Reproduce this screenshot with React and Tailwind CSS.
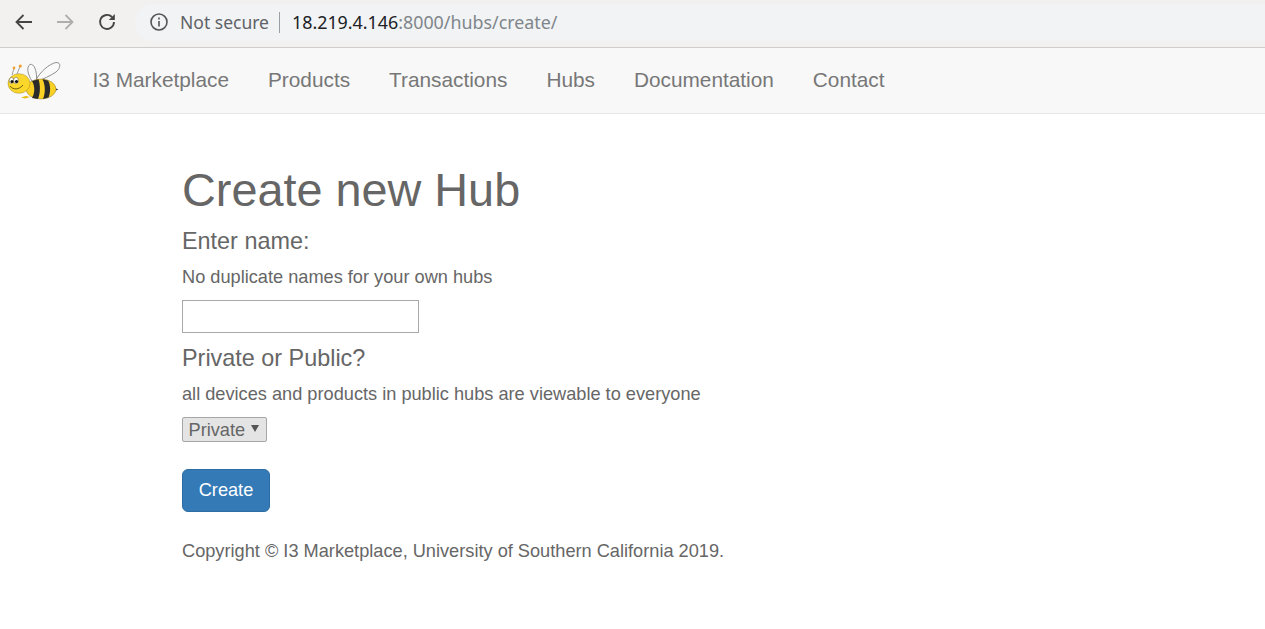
const navLinks = ["I3 Marketplace", "Products", "Transactions", "Hubs", "Documentation", "Contact"];

function Bee() {
  return (
    <svg width="70" height="60" viewBox="0 50 70 60" className="block shrink-0">
      <path d="M32 80 C28 74 26 66 30 63.5 C34 62 37 70 36.5 78" fill="#fafafa" stroke="#8f8f8f" strokeWidth="1" />
      <path d="M36 79 C40 71 49 63 56 61.5 C61 61 61 67 56 71 C50 75 43 78 38 80" fill="#fafafa" stroke="#8f8f8f" strokeWidth="1" />
      <ellipse cx="41" cy="88" rx="15" ry="10" fill="#fbd125" stroke="#6b5a10" strokeWidth="0.4" />
      <path d="M32 80 C35 85 35 92 32 97 L38 98 C40.5 92 40.5 84 38.5 78.2 Z" fill="#2b2b2b" />
      <path d="M42.5 78.2 C45.5 84 45.5 92 43 98 L48.5 96.6 C51 91 50.5 83 48 79.6 Z" fill="#2b2b2b" />
      <path d="M56 87.5 L58.5 88.5 L56 89.5 Z" fill="#444" />
      <path d="M26 95 L21 96.5 L25 97.5 L30 96 Z" fill="#e6b800" />
      <ellipse cx="19" cy="82.5" rx="11" ry="9.8" fill="#fcd72b" stroke="#8a7414" strokeWidth="0.4" />
      <path d="M12 74 L14 67.5 M17 73 L20 65.5" stroke="#8a8a8a" strokeWidth="0.8" fill="none" />
      <circle cx="14" cy="67" r="1.4" fill="#f0a030" />
      <circle cx="20.3" cy="65" r="1.6" fill="#f0a030" />
      <ellipse cx="11.5" cy="79.5" rx="2.2" ry="3" fill="#fff" stroke="#333" strokeWidth="0.4" />
      <ellipse cx="16" cy="79.5" rx="2.4" ry="3.2" fill="#fff" stroke="#333" strokeWidth="0.4" />
      <circle cx="12" cy="80.5" r="1.5" fill="#111" />
      <circle cx="16.5" cy="80.5" r="1.6" fill="#111" />
      <path d="M10 85 C13 89 19 89 23 84" stroke="#4a3c08" strokeWidth="0.8" fill="none" />
    </svg>
  );
}

export default function App() {
  return (
    <div className="min-h-[629px] bg-white font-['Liberation_Sans',sans-serif] text-[#666666]">
      <div className="flex h-[48px] items-center border-b border-[#cfcdcb] bg-[#f2f1f0] pb-[3px]">
        <div className="flex w-[135px] shrink-0 items-center pl-[14px]">
          <svg width="20" height="20" viewBox="0 0 20 20" fill="none" stroke="#454545" strokeWidth="1.8">
            <path d="M18 10H2.5M9.5 3L2.5 10l7 7" />
          </svg>
          <svg width="20" height="20" viewBox="0 0 20 20" fill="none" stroke="#aeaeae" strokeWidth="1.8" className="ml-[21px]">
            <path d="M2 10h15.5M10.5 3l7 7-7 7" />
          </svg>
          <svg width="20" height="20" viewBox="0 0 20 20" fill="none" stroke="#454545" strokeWidth="1.9" className="ml-[22px]">
            <path d="M17 10a7 7 0 1 1-2-5" />
            <path d="M17.8 2v6h-6z" fill="#454545" stroke="none" />
          </svg>
        </div>
        <div className="flex h-[37px] flex-1 items-center rounded-l-full bg-[#f1f3f4] font-['Noto_Sans',sans-serif] text-[17.85px]">
          <svg width="20" height="20" viewBox="0 0 20 20" fill="none" stroke="#555" strokeWidth="1.6" className="ml-[14px]">
            <circle cx="10" cy="10" r="8" />
            <path d="M10 9v5.5M10 5.5v2" />
          </svg>
          <span className="ml-[11px] text-[17.5px] text-[#5f6368]">Not secure</span>
          <span className="ml-[10px] mr-[12px] h-[21px] w-px bg-[#9aa0a6]" />
          <span className="text-[#202124]">18.219.4.146</span>
          <span className="text-[#80868b]">:8000/hubs/create/</span>
        </div>
      </div>

      <nav className="flex h-[66px] items-center border-b border-[#e7e7e7] bg-[#f8f8f8]">
        <Bee />
        <div className="ml-[22.6px] mt-[-2px] flex gap-[39px] text-[20.8px] text-[#777777]">
          {navLinks.map((link) => (
            <a key={link} href="#">
              {link}
            </a>
          ))}
        </div>
      </nav>

      <main className="pl-[182px]">
        <h1 className="mt-[47px] text-[46.8px] leading-[58px] font-normal">Create new Hub</h1>
        <h3 className="mt-[7px] text-[23.4px] leading-[30px]">Enter name:</h3>
        <p className="mt-[8px] text-[18.2px] leading-[26px]">No duplicate names for your own hubs</p>
        <input type="text" className="mt-[10px] block h-[33px] w-[237px] border border-[#a9a9a9] bg-white" />
        <h3 className="mt-[10px] text-[23.4px] leading-[30px]">Private or Public?</h3>
        <p className="mt-[8px] text-[18.2px] leading-[26px]">all devices and products in public hubs are viewable to everyone</p>
        <div className="mt-[10px] flex h-[25px] w-[85px] items-center rounded-[2px] border border-[#a6a6a6] bg-[#e4e4e4] pl-[5.5px] pt-[2px] text-[18.2px] text-[#666666]">
          Private
          <span className="ml-[6px] mt-[-4px] h-0 w-0 border-x-[4px] border-t-[7px] border-x-transparent border-t-[#555]" />
        </div>
        <button className="mt-[27px] block h-[43px] w-[88px] rounded-[6px] border border-[#2e6da4] bg-[#337ab7] text-[18.2px] text-white">
          Create
        </button>
        <p className="mt-[26px] text-[18.2px] leading-[26px]">
          Copyright © I3 Marketplace, University of Southern California 2019.
        </p>
      </main>
    </div>
  );
}
